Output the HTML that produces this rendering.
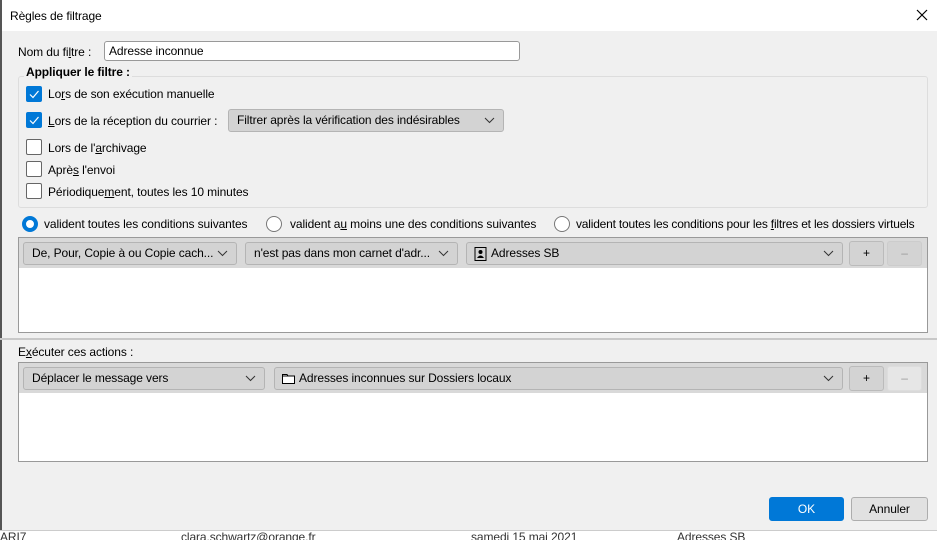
<!DOCTYPE html><html><head><meta charset="utf-8"><style>
body{margin:0;width:937px;height:539px;background:#f0f0f0;font-family:"Liberation Sans",sans-serif;font-size:12px;color:#000;position:relative;overflow:hidden;letter-spacing:-0.1px}
.a{position:absolute;white-space:nowrap}
.cb{position:absolute;width:14px;height:14px;border:1px solid #666;background:#fff;border-radius:2px}
.cb.on{background:#0078d7;border-color:#0078d7}
.dd{position:absolute;height:22px;background:#d3d3d3;border:1px solid #b4b4b4;border-radius:3px;box-sizing:border-box;line-height:20px;padding-left:8px;white-space:nowrap;overflow:hidden}
.dd svg.ch{position:absolute;right:8px;top:7px}
.rad{position:absolute;width:14px;height:14px;border:1px solid #777;border-radius:50%;background:#fff}
.btn{position:absolute;box-sizing:border-box;border:1px solid #bbb;border-radius:3px;background:#d3d3d3;text-align:center}
</style></head><body>
<div class="a" style="left:0;top:0;width:937px;height:31px;background:#fff"></div>
<div class="a" style="left:0;top:0;width:2px;height:539px;background:#555"></div>
<div class="a" style="left:10px;top:9px">Règles de filtrage</div>
<svg class="a" style="left:916px;top:9px" width="12" height="12"><path d="M1 1L11 11M11 1L1 11" stroke="#000" stroke-width="1.2"/></svg>
<div class="a" style="left:18px;top:45px">Nom du fi<u>l</u>tre :</div>
<div class="a" style="left:104px;top:41px;height:18px;border:1px solid #999;border-radius:3px;background:#fff;line-height:18px;padding-left:4px;width:410px">Adresse inconnue</div>
<div class="a" style="left:18px;top:76px;width:908px;height:130px;border:1px solid #ddd;border-radius:3px"></div>
<div class="a" style="left:24px;top:65px;background:#f0f0f0;padding:0 2px;font-weight:bold">Appliquer le filtre :</div>
<div class="cb on" style="left:26px;top:86px"><svg width="14" height="14"><path d="M3 7.5L6 10.5L11.5 4" stroke="#fff" fill="none" stroke-width="1.2"/></svg></div>
<div class="a" style="left:48px;top:87px">Lo<u>r</u>s de son exécution manuelle</div>
<div class="cb on" style="left:26px;top:112px"><svg width="14" height="14"><path d="M3 7.5L6 10.5L11.5 4" stroke="#fff" fill="none" stroke-width="1.2"/></svg></div>
<div class="a" style="left:48px;top:114px"><u>L</u>ors de la réception du courrier :</div>
<div class="dd" style="left:228px;top:109px;width:276px;height:23px">Filtrer après la vérification des indésirables<svg class="ch" width="11" height="7"><path d="M1 1L5.5 5.5L10 1" stroke="#333" fill="none"/></svg></div>
<div class="cb" style="left:26px;top:139px"></div><div class="a" style="left:48px;top:141px">Lors de l'<u>a</u>rchivage</div>
<div class="cb" style="left:26px;top:161px"></div><div class="a" style="left:48px;top:163px">Aprè<u>s</u> l'envoi</div>
<div class="cb" style="left:26px;top:183px"></div><div class="a" style="left:48px;top:185px">Périodique<u>m</u>ent, toutes les 10 minutes</div>
<div class="rad" style="left:22px;top:216px;border:4px solid #0078d7;width:8px;height:8px"></div>
<div class="a" style="left:44px;top:217px">valident toutes les conditions suivantes</div>
<div class="rad" style="left:266px;top:216px"></div>
<div class="a" style="left:290px;top:217px">valident a<u>u</u> moins une des conditions suivantes</div>
<div class="rad" style="left:554px;top:216px"></div>
<div class="a" style="left:576px;top:217px;letter-spacing:-0.2px">valident toutes les conditions pour les <u>f</u>iltres et les dossiers virtuels</div>
<div class="a" style="left:18px;top:237px;width:908px;height:94px;border:1px solid #999;background:#fff"></div>
<div class="a" style="left:19px;top:238px;width:908px;height:30px;background:#d9d9d9"></div>
<div class="dd" style="left:23px;top:242px;width:214px;height:23px">De, Pour, Copie à ou Copie cach...<svg class="ch" width="11" height="7"><path d="M1 1L5.5 5.5L10 1" stroke="#333" fill="none"/></svg></div>
<div class="dd" style="left:245px;top:242px;width:213px;height:23px">n'est pas dans mon carnet d'adr...<svg class="ch" width="11" height="7"><path d="M1 1L5.5 5.5L10 1" stroke="#333" fill="none"/></svg></div>
<div class="dd" style="left:466px;top:242px;width:377px;height:23px;padding-left:24px"><svg class="a" style="left:7px;top:4px" width="13" height="14"><rect x="1" y="0.5" width="11" height="13" fill="none" stroke="#000"/><circle cx="6.5" cy="5" r="2" fill="#000"/><path d="M3 11Q6.5 6 10 11Z" fill="#000"/></svg>Adresses SB<svg class="ch" width="11" height="7"><path d="M1 1L5.5 5.5L10 1" stroke="#333" fill="none"/></svg></div>
<div class="btn" style="left:849px;top:241px;width:35px;height:25px;line-height:23px">+</div>
<div class="btn" style="left:887px;top:241px;width:35px;height:25px;line-height:23px;color:#999;border-color:#ccc">–</div>
<div class="a" style="left:0;top:338px;width:937px;height:2px;background:#c8c8c8"></div>
<div class="a" style="left:18px;top:345px">E<u>x</u>écuter ces actions :</div>
<div class="a" style="left:18px;top:362px;width:908px;height:98px;border:1px solid #999;background:#fff"></div>
<div class="a" style="left:19px;top:363px;width:908px;height:30px;background:#d9d9d9"></div>
<div class="dd" style="left:23px;top:367px;width:242px;height:23px">Déplacer le message vers<svg class="ch" width="11" height="7"><path d="M1 1L5.5 5.5L10 1" stroke="#333" fill="none"/></svg></div>
<div class="dd" style="left:274px;top:367px;width:569px;height:23px;padding-left:24px"><svg class="a" style="left:7px;top:5px" width="13" height="11"><path d="M0.5 1.5H5L6 3H12.5V10.5H0.5Z" fill="#fff" stroke="#000"/><path d="M0.5 3H12.5" stroke="#000"/></svg>Adresses inconnues sur Dossiers locaux<svg class="ch" width="11" height="7"><path d="M1 1L5.5 5.5L10 1" stroke="#333" fill="none"/></svg></div>
<div class="btn" style="left:849px;top:366px;width:35px;height:25px;line-height:23px">+</div>
<div class="btn" style="left:887px;top:366px;width:35px;height:25px;line-height:23px;color:#999;border-color:#ddd;background:#e6e6e6">–</div>
<div class="btn" style="left:769px;top:497px;width:75px;height:24px;line-height:22px;background:#0078d7;border-color:#0078d7;color:#fff">OK</div>
<div class="btn" style="left:851px;top:497px;width:77px;height:24px;line-height:22px;background:#e1e1e1;border-color:#adadad">Annuler</div>
<div class="a" style="left:0;top:530px;width:937px;height:9px;background:#fff;border-top:1px solid #ccc;overflow:hidden">
<div class="a" style="left:0;top:-1px;color:#333">ARI7</div>
<div class="a" style="left:181px;top:-1px;color:#333">clara.schwartz@orange.fr</div>
<div class="a" style="left:471px;top:-1px;color:#333">samedi 15 mai 2021</div>
<div class="a" style="left:677px;top:-1px;color:#333">Adresses SB</div>
</div>
</body></html>
